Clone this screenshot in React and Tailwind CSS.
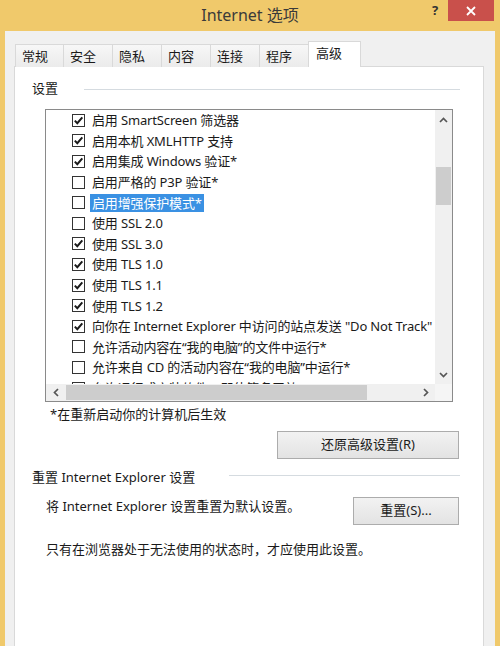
import React from "react";

const FONT = { fontFamily: '"Noto Sans", "Noto Sans CJK SC", sans-serif' };

const items = [
  { c: true, t: "启用 SmartScreen 筛选器" },
  { c: true, t: "启用本机 XMLHTTP 支持" },
  { c: true, t: "启用集成 Windows 验证*" },
  { c: false, t: "启用严格的 P3P 验证*" },
  { c: false, t: "启用增强保护模式*", sel: true },
  { c: false, t: "使用 SSL 2.0" },
  { c: true, t: "使用 SSL 3.0" },
  { c: true, t: "使用 TLS 1.0" },
  { c: true, t: "使用 TLS 1.1" },
  { c: true, t: "使用 TLS 1.2" },
  { c: true, t: "向你在 Internet Explorer 中访问的站点发送 \"Do Not Track\"" },
  { c: false, t: "允许活动内容在\u201c我的电脑\u201d的文件中运行*" },
  { c: false, t: "允许来自 CD 的活动内容在\u201c我的电脑\u201d中运行*" },
  { c: false, t: "允许运行或安装软件，即使签名无效" },
];

const tabs = [
  { t: "常规", w: "w-[49px]" },
  { t: "安全", w: "w-[50px]" },
  { t: "隐私", w: "w-[50px]" },
  { t: "内容", w: "w-[50px]" },
  { t: "连接", w: "w-[50px]" },
  { t: "程序", w: "w-[50px]" },
];

function Check({ on }) {
  return (
    <div className="w-[13px] h-[13px] border border-[#333] bg-white flex items-center justify-center shrink-0">
      {on && (
        <svg width="11" height="11" viewBox="0 0 11 11">
          <path d="M1.8 5.6 L4.3 8.2 L9.3 2.4" fill="none" stroke="#1a1a1a" strokeWidth="2" />
        </svg>
      )}
    </div>
  );
}

function Chevron({ dir }) {
  const d = {
    up: "M1 5 L4.5 1.5 L8 5",
    down: "M1 2 L4.5 5.5 L8 2",
    left: "M5 1 L1.5 4.5 L5 8",
    right: "M2 1 L5.5 4.5 L2 8",
  }[dir];
  const w = dir === "up" || dir === "down" ? 9 : 7;
  const h = dir === "up" || dir === "down" ? 7 : 9;
  return (
    <svg width={w} height={h} viewBox={`0 0 ${w} ${h}`}>
      <path d={d} fill="none" stroke="#555" strokeWidth="1.7" />
    </svg>
  );
}

function Button({ children, w }) {
  return (
    <div
      className={`${w} h-[28px] border border-[#acacac] bg-gradient-to-b from-[#f2f2f2] to-[#e3e3e3] flex items-center justify-center text-[13px] text-[#1a1a1a]`}
    >
      {children}
    </div>
  );
}

export default function App() {
  return (
    <div className="w-[500px] h-[646px] bg-[#f0c96b] flex flex-col overflow-hidden" style={FONT}>
      {/* title bar */}
      <div className="h-[31px] flex shrink-0">
        <div className="w-[80px]" />
        <div className="flex-1 flex items-start justify-center pt-[3px] text-[16px] text-[#3a3a3a]">
          Internet 选项
        </div>
        <div className="w-[80px] flex items-start justify-end pr-[6px]">
          <div className="h-[21px] w-[14px] flex items-center justify-center text-[13px] font-bold text-[#333] mr-[6px]">
            ?
          </div>
          <div className="w-[46px] h-[21px] bg-[#c9504b] flex items-center justify-center">
            <svg width="10" height="10" viewBox="0 0 10 10">
              <path d="M1 1 L9 9 M9 1 L1 9" stroke="#fff" strokeWidth="1.8" />
            </svg>
          </div>
        </div>
      </div>

      {/* client */}
      <div className="mx-[5px] flex-1 bg-[#f0f0f0] flex flex-col pt-[10px] pl-[9px] pr-[11px]">
        {/* tabs */}
        <div className="flex items-end h-[26px] pl-[1px] relative z-10 -mb-px">
          {tabs.map((tb) => (
            <div
              key={tb.t}
              className={`${tb.w} -mr-px h-[23px] border border-b-0 border-[#d9d9d9] bg-gradient-to-b from-[#f7f7f7] to-[#ebebeb] text-[13px] text-[#1a1a1a] pl-[6px] leading-[22px]`}
            >
              {tb.t}
            </div>
          ))}
          <div className="w-[53px] h-[26px] border border-b-0 border-[#d9d9d9] bg-white text-[13px] text-[#1a1a1a] pl-[7px] leading-[22px]">
            高级
          </div>
        </div>

        {/* panel */}
        <div className="flex-1 bg-white border border-b-0 border-[#d9d9d9] flex flex-col pt-[12px] pl-[17px] pr-[23px] text-[13px] text-[#1a1a1a]">
          {/* 设置 header */}
          <div className="flex items-center h-[20px]">
            <span>设置</span>
            <div className="flex-1 ml-[26px] h-px bg-[#d5dbe0]" />
          </div>

          {/* list box */}
          <div className="mt-[10px] ml-[13px] mr-[7px] h-[293px] border border-[#8a8a8a] flex flex-col">
            <div className="flex flex-1 min-h-0">
              <div className="flex-1 min-w-0 overflow-hidden">
                {items.map((it, i) => (
                  <div key={i} className="h-[20.6px] flex items-center pl-[26px] whitespace-nowrap tracking-[-0.15px]">
                    <Check on={it.c} />
                    <span
                      className={
                        it.sel
                          ? "ml-[5px] px-[2px] bg-[#3a91e3] text-white leading-[18px]"
                          : "ml-[5px] px-[2px] leading-[18px]"
                      }
                    >
                      {it.t}
                    </span>
                  </div>
                ))}
              </div>
              {/* vertical scrollbar */}
              <div className="w-[17px] bg-[#f0f0f0] flex flex-col items-center shrink-0">
                <div className="h-[20px] flex items-center justify-center">
                  <Chevron dir="up" />
                </div>
                <div className="flex-1 w-full px-px pt-[37px]">
                  <div className="h-[38px] bg-[#cdcdcd]" />
                </div>
                <div className="h-[20px] flex items-center justify-center">
                  <Chevron dir="down" />
                </div>
              </div>
            </div>
            {/* horizontal scrollbar */}
            <div className="h-[17px] flex bg-[#f0f0f0] shrink-0">
              <div className="w-[20px] flex items-center justify-center">
                <Chevron dir="left" />
              </div>
              <div className="flex-1 py-px flex">
                <div className="w-[301px] bg-[#cdcdcd]" />
              </div>
              <div className="w-[20px] flex items-center justify-center">
                <Chevron dir="right" />
              </div>
              <div className="w-[17px] bg-[#f5f5f5]" />
            </div>
          </div>

          <div className="ml-[18px] mt-[3px] h-[18px] leading-[18px]">*在重新启动你的计算机后生效</div>

          <div className="mt-[8px] flex justify-end pr-px">
            <Button w="w-[182px]">还原高级设置(R)</Button>
          </div>

          {/* reset section */}
          <div className="mt-[9px] flex items-center h-[20px]">
            <span>重置 Internet Explorer 设置</span>
            <div className="flex-1 ml-[34px] h-px bg-[#d5dbe0] -mt-[6px]" />
          </div>

          <div className="mt-[9px] flex items-start pl-[14px] pr-px">
            <span className="flex-1 leading-[18px]">将 Internet Explorer 设置重置为默认设置。</span>
            <Button w="w-[106px]">重置(S)...</Button>
          </div>

          <div className="mt-[15px] pl-[14px] leading-[18px]">只有在浏览器处于无法使用的状态时，才应使用此设置。</div>
        </div>
      </div>
    </div>
  );
}
